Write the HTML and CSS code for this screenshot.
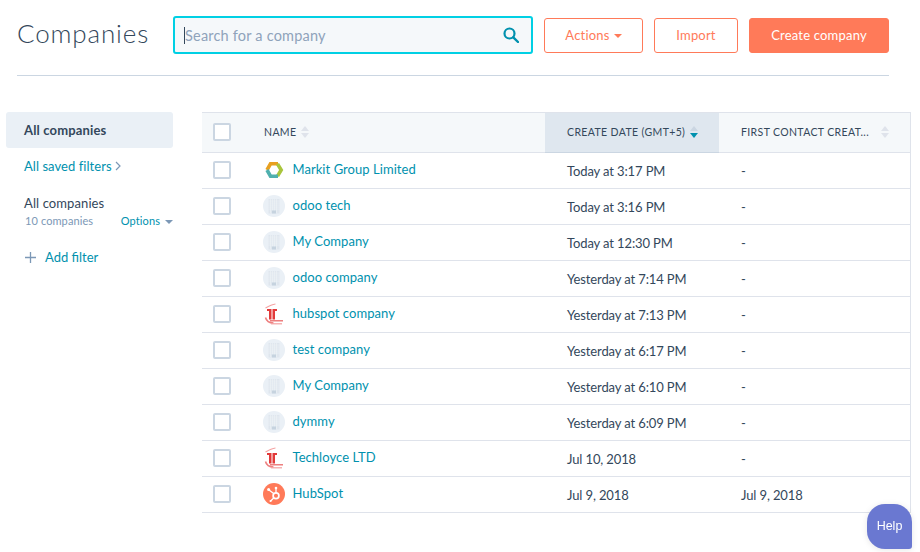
FILE: index.html
```html
<!DOCTYPE html>
<html lang="en">
<head>
<meta charset="utf-8">
<title>Companies</title>
<link rel="stylesheet" href="styles.css">
</head>
<body>
<svg class="defs" width="0" height="0" aria-hidden="true">
  <symbol id="bld" viewBox="0 0 22 22">
    <circle cx="11" cy="11" r="11" fill="#eaf0f6"/>
    <rect x="5.500" y="4" width="11" height="14.500" fill="#dfe6ee"/>
    <path d="M7.500 4v14M9.500 4v14M11.500 4v14M13.500 4v14M5.500 6h11M5.500 8h11M5.500 10h11M5.500 12h11M5.500 14h11" stroke="#eef3f7" stroke-width=".6"/>
    <rect x="9" y="15.500" width="4" height="3" fill="#c6d3df"/>
  </symbol>
  <symbol id="tl" viewBox="0 0 22 22">
    <path d="M2.500 5C6 3 9 1.500 12.500 1" fill="none" stroke="#f4a3a3" stroke-width="1.200"/>
    <path d="M4 6h4.500v10.500H6V8H4zM9.500 6H14v2h-2v8.500H9.500z" fill="#e23a3a"/>
    <path d="M2.500 14.500c1 4 3.500 5.500 8 5.500" fill="none" stroke="#ee8080" stroke-width="1.600"/>
    <path d="M7 17.800h13" stroke="#ea6a6a" stroke-width="1.300"/>
    <path d="M8 20.800h11" stroke="#f3a0a0" stroke-width="1.200"/>
  </symbol>
</svg>
<header class="top">
  <h1 class="title">Companies</h1>
  <div class="search">
    <span class="caret"></span>
    <span class="placeholder">Search for a company</span>
    <svg class="search-icon" viewBox="0 0 16 16" width="16" height="16"><circle cx="6.500" cy="6.500" r="5" fill="none" stroke="#0091ae" stroke-width="2.200"/><path d="M10.300 10.300L15 15" stroke="#0091ae" stroke-width="2.400" stroke-linecap="round"/></svg>
  </div>
  <button class="btn btn-actions">Actions<span class="btn-caret"></span></button>
  <button class="btn btn-import">Import</button>
  <button class="btn btn-create">Create company</button>
</header>
<main class="content">
  <aside class="side">
    <div class="side-active">All companies</div>
    <div class="saved">All saved filters
      <svg width="6" height="10" viewBox="0 0 6 10"><path d="M1 1l4 4-4 4" fill="none" stroke="#7c98b6" stroke-width="1.200"/></svg>
    </div>
    <div class="view-name">All companies</div>
    <div class="view-meta"><span class="count">10 companies</span><span class="options">Options<span class="opt-caret"></span></span></div>
    <div class="add-filter"><svg width="11" height="11" viewBox="0 0 11 11"><path d="M5.500 0v11M0 5.500h11" stroke="#7c98b6" stroke-width="1.300"/></svg><span>Add filter</span></div>
  </aside>
  <table class="grid">
    <colgroup><col class="c-check"><col class="c-name"><col class="c-date"><col class="c-first"></colgroup>
    <thead>
      <tr>
        <th class="cell-check"><span class="box"></span></th>
        <th class="th-name">NAME<span class="sort"><i class="up"></i><i class="down"></i></span></th>
        <th class="th-date">CREATE DATE (GMT+5)<span class="sort"><i class="up"></i><i class="down on"></i></span></th>
        <th class="th-first"><span class="th-first-in"><span>FIRST CONTACT CREAT...</span><span class="sort"><i class="up"></i><i class="down"></i></span></span></th>
      </tr>
    </thead>
    <tbody>
      <tr><td class="cell-check"><span class="box"></span></td><td><span class="co">
        <svg class="logo" viewBox="0 0 22 22"><g fill="none" stroke-width="3.600"><path d="M4 11L7.500 4.800H15" stroke="#e8a020"/><path d="M14.500 4.800L18.200 11 14.500 17.200" stroke="#a9c53c"/><path d="M15 17.200H7.500L4 11" stroke="#4fb0ae"/></g></svg>
        <a>Markit Group Limited</a></span></td><td>Today at 3:17 PM</td><td>-</td></tr>
      <tr><td class="cell-check"><span class="box"></span></td><td><span class="co"><svg class="logo"><use href="#bld"/></svg><a>odoo tech</a></span></td><td>Today at 3:16 PM</td><td>-</td></tr>
      <tr><td class="cell-check"><span class="box"></span></td><td><span class="co"><svg class="logo"><use href="#bld"/></svg><a>My Company</a></span></td><td>Today at 12:30 PM</td><td>-</td></tr>
      <tr><td class="cell-check"><span class="box"></span></td><td><span class="co"><svg class="logo"><use href="#bld"/></svg><a>odoo company</a></span></td><td>Yesterday at 7:14 PM</td><td>-</td></tr>
      <tr><td class="cell-check"><span class="box"></span></td><td><span class="co"><svg class="logo"><use href="#tl"/></svg><a>hubspot company</a></span></td><td>Yesterday at 7:13 PM</td><td>-</td></tr>
      <tr><td class="cell-check"><span class="box"></span></td><td><span class="co"><svg class="logo"><use href="#bld"/></svg><a>test company</a></span></td><td>Yesterday at 6:17 PM</td><td>-</td></tr>
      <tr><td class="cell-check"><span class="box"></span></td><td><span class="co"><svg class="logo"><use href="#bld"/></svg><a>My Company</a></span></td><td>Yesterday at 6:10 PM</td><td>-</td></tr>
      <tr><td class="cell-check"><span class="box"></span></td><td><span class="co"><svg class="logo"><use href="#bld"/></svg><a>dymmy</a></span></td><td>Yesterday at 6:09 PM</td><td>-</td></tr>
      <tr><td class="cell-check"><span class="box"></span></td><td><span class="co"><svg class="logo"><use href="#tl"/></svg><a>Techloyce LTD</a></span></td><td>Jul 10, 2018</td><td>-</td></tr>
      <tr><td class="cell-check"><span class="box"></span></td><td><span class="co">
        <svg class="logo" viewBox="0 0 22 22"><circle cx="11" cy="11" r="11" fill="#ff7a59"/><g fill="none" stroke="#fff"><circle cx="13" cy="12.800" r="2.900" stroke-width="1.700"/><path d="M13 9.500V5.500M11 10.800L6 7M10.700 15l-2.800 2.800" stroke-width="1.300"/></g><circle cx="13" cy="5" r="1.300" fill="#fff"/><circle cx="5.600" cy="6.600" r="1.500" fill="#fff"/><circle cx="7.600" cy="18" r="1.100" fill="#fff"/></svg>
        <a>HubSpot</a></span></td><td>Jul 9, 2018</td><td>Jul 9, 2018</td></tr>
    </tbody>
  </table>
</main>
<div class="help">Help</div>
</body>
</html>
```
FILE: styles.css
```css
* { box-sizing: border-box; }
html, body { margin: 0; height: 100%; }
body {
  font-family: Lato, "Noto Sans", sans-serif;
  font-size: 13px;
  color: #33475b;
  background: #fff;
  overflow: hidden;
}
.defs { display: block; height: 0; }

.top {
  display: flex;
  align-items: center;
  height: 76px;
  margin: 0 31px 0 17px;
  padding: 0 0 5px;
  border-bottom: 1px solid #cbd6e2;
}
.title {
  width: 156px;
  margin: 0 0 4px;
  font-size: 26px;
  font-weight: 300;
  letter-spacing: .85px;
  color: #33475b;
}
.search {
  position: relative;
  display: flex;
  align-items: center;
  width: 360px;
  height: 38px;
  margin-right: 11px;
  padding-left: 10px;
  border: 2px solid #00d0e4;
  border-radius: 3px;
  background: #f5f8fa;
}
.caret {
  position: absolute;
  left: 9px;
  top: 9px;
  width: 1px;
  height: 17px;
  background: #33475b;
}
.placeholder { font-size: 14.500px; letter-spacing: .2px; color: #8fa3bb; }
.search-icon { position: absolute; right: 12px; top: 9px; }
.btn {
  height: 35px;
  margin-right: 11px;
  padding: 0 0 1px;
  border: 1px solid #ff7a59;
  border-radius: 3px;
  background: #fff;
  color: #ff7a59;
  font-family: inherit;
  font-size: 13px;
  letter-spacing: .2px;
}
.btn-actions { width: 99px; }
.btn-import { width: 84px; }
.btn-create { width: 140px; margin-right: 0; background: #ff7a59; color: #fff; }
.btn-caret {
  display: inline-block;
  margin-left: 4px;
  vertical-align: 2px;
  border: 4px solid transparent;
  border-bottom-width: 0;
  border-top-color: #ff7a59;
}

.content {
  display: flex;
  align-items: flex-start;
  padding: 36px 0 0 6px;
}
.side { width: 167px; margin-right: 29px; }
.side-active {
  height: 36px;
  padding-left: 18px;
  line-height: 36px;
  font-weight: 700;
  letter-spacing: .15px;
  border-radius: 3px;
  background: #eaf0f6;
}
.saved {
  display: flex;
  align-items: center;
  gap: 3px;
  height: 36px;
  padding-left: 18px;
  color: #0091ae;
  letter-spacing: .05px;
}
.view-name { margin-top: 10px; padding-left: 18px; line-height: 18px; letter-spacing: .1px; }
.view-meta {
  display: flex;
  justify-content: space-between;
  padding-left: 19px;
  font-size: 11px;
  line-height: 17px;
  letter-spacing: .1px;
}
.count { color: #7c98b6; }
.options { color: #0091ae; }
.opt-caret {
  display: inline-block;
  margin-left: 5px;
  vertical-align: 1px;
  border: 4px solid transparent;
  border-bottom-width: 0;
  border-top-color: #7c98b6;
}
.add-filter {
  display: flex;
  align-items: center;
  gap: 9px;
  margin-top: 19px;
  padding-left: 19px;
  color: #0091ae;
  line-height: 18px;
}

.grid {
  width: 709px;
  table-layout: fixed;
  border-collapse: separate;
  border-spacing: 0;
}
.c-check { width: 48px; }
.c-name { width: 295px; }
.c-date { width: 174px; }
.grid th {
  height: 41px;
  padding: 0 0 2px 22px;
  border-top: 1px solid #dfe3eb;
  border-bottom: 1px solid #dfe3eb;
  background: #f5f8fa;
  text-align: left;
  font-size: 10.500px;
  font-weight: 400;
  white-space: nowrap;
  letter-spacing: .37px;
}
.grid td {
  height: 36px;
  padding: 0 0 0 22px;
  border-bottom: 1px solid #dfe3eb;
  letter-spacing: -.12px;
}
.grid th:last-child, .grid td:last-child { border-right: 1px solid #dfe3eb; }
.grid th:first-child { padding: 0 0 2px 11px; }
.grid td:first-child { padding: 0 0 2px 11px; }
.grid .th-name { padding-left: 14px; }
.grid td:nth-child(2) { padding-left: 13px; }
.grid .th-date { background: #dfe7ef; border-bottom-color: #cbd6e2; }
.box {
  display: block;
  width: 18px;
  height: 18px;
  border: 2px solid #cbd6e2;
  border-radius: 2px;
  background: #fff;
}
.sort {
  display: inline-block;
  margin-left: 5px;
  vertical-align: -2px;
}
.sort i {
  display: block;
  width: 0;
  border: 4px solid transparent;
}
.sort .up { border-top-width: 0; border-bottom-width: 5px; border-bottom-color: #dfe3eb; margin-bottom: 2px; }
.sort .down { border-bottom-width: 0; border-top-width: 5px; border-top-color: #dfe3eb; }
.th-date .sort .up { border-bottom-color: #cbd6e2; }
.sort .down.on { border-top-color: #0091ae; }
.th-first-in { display: flex; justify-content: space-between; align-items: center; padding-right: 21px; }
.co { display: flex; align-items: center; margin-top: -3px; }
.logo { width: 22px; height: 22px; margin-right: 7.500px; flex: none; position: relative; top: 1px; }
.co a { color: #0091ae; letter-spacing: .05px; }

.help {
  position: fixed;
  left: 867px;
  top: 504px;
  width: 45px;
  height: 45px;
  border-radius: 18px 18px 3px 18px;
  background: #6a78d1;
  color: #fff;
  font-family: "Liberation Sans", sans-serif;
  font-size: 12.500px;
  line-height: 45px;
  text-align: center;
  box-shadow: 0 1px 6px rgba(0,0,0,.1);
}
```
